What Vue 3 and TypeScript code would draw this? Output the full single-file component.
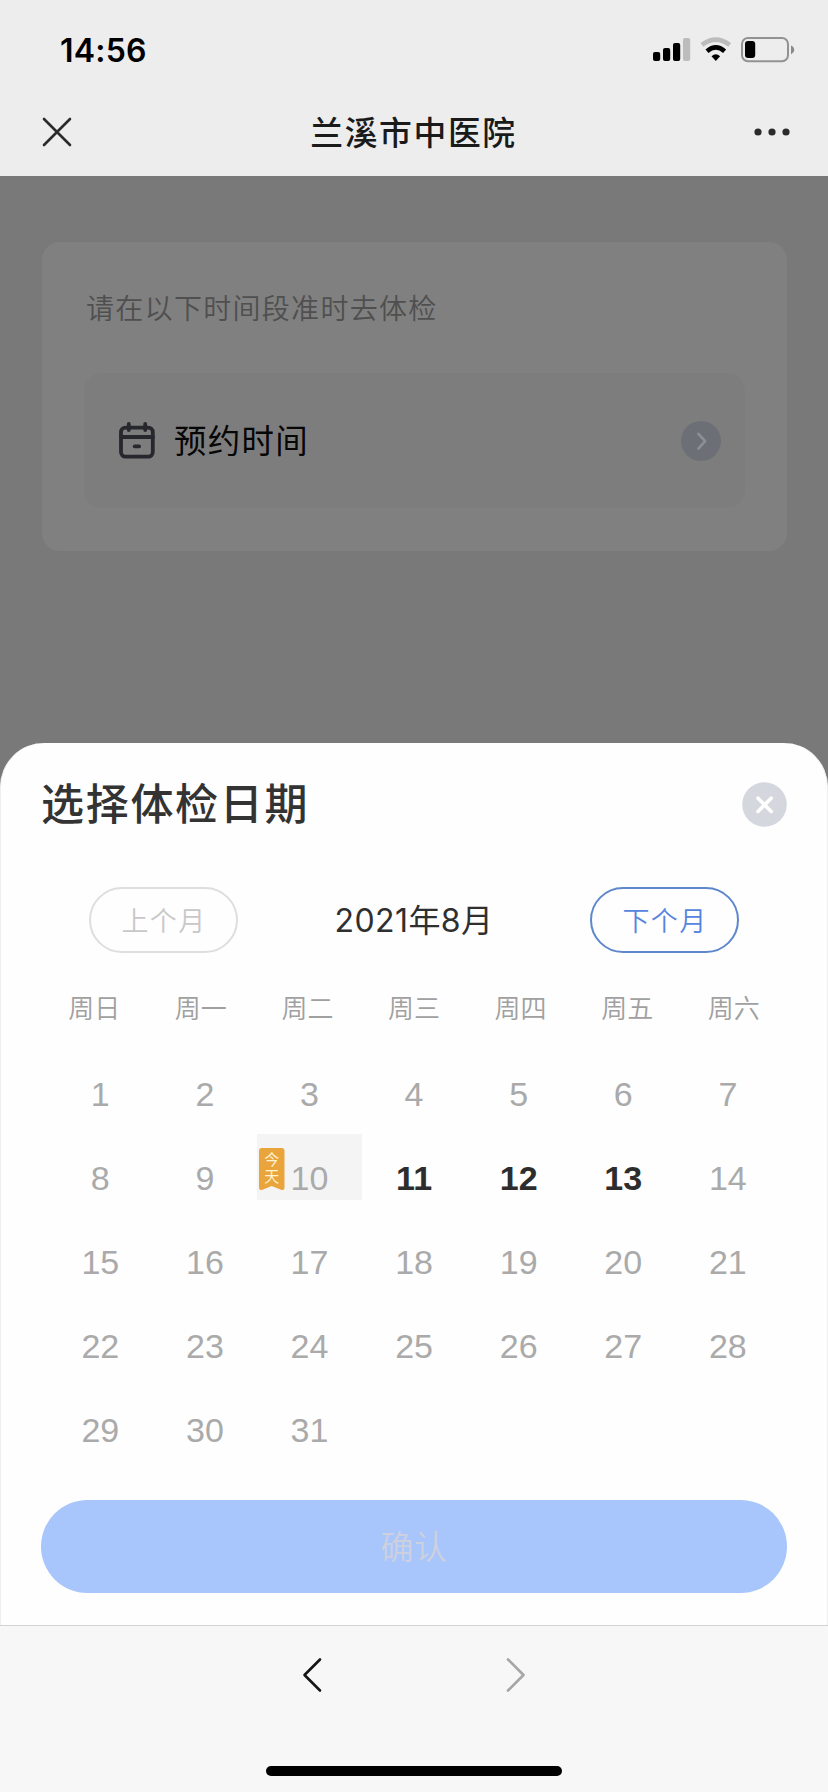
<script setup lang="ts">
interface Day {
  date: number
  available: boolean
  today: boolean
}

const weekdays: string[] = ['周日', '周一', '周二', '周三', '周四', '周五', '周六']
const days: Day[] = Array.from({ length: 31 }, (_, i) => ({
  date: i + 1,
  available: i + 1 >= 11 && i + 1 <= 13,
  today: i + 1 === 10,
}))
</script>

<template>
  <div class="screen">
    <header class="header">
      <div class="status">
        <span class="clock">14:56</span>
        <svg class="status-icons" width="142" height="26" viewBox="0 0 142 26">
          <rect x="0" y="15" width="7.2" height="9" rx="2" />
          <rect x="10" y="11" width="7.2" height="13" rx="2" />
          <rect x="20" y="6" width="7.2" height="18" rx="2" />
          <rect x="30" y="1" width="7.2" height="23" rx="2" fill="#bcbcbc" />
          <path d="M48.900 7.800 Q62.800 -2.600 76.700 7.800" fill="none" stroke="#bcbcbc" stroke-width="4.600" />
          <path d="M54 14.200 Q62.800 6.600 71.600 14.200" fill="none" stroke="#000" stroke-width="4.600" />
          <path d="M58.500 19.200 Q62.800 15.400 67.100 19.200 L62.800 24 Z" />
          <rect x="89" y="1" width="46" height="23.2" rx="6" fill="none" stroke="#929292" stroke-width="2" />
          <rect x="92" y="4" width="10.2" height="17" rx="3" />
          <path d="M138 8.4 q3.2 1.4 3.2 4.4 t-3.2 4.4 z" fill="#8a8a8a" />
        </svg>
      </div>
      <div class="navbar">
        <svg width="30" height="30" viewBox="0 0 30 30">
          <path d="M2 2 28 28M28 2 2 28" stroke="#2b2b2b" stroke-width="2.6" fill="none" stroke-linecap="round" />
        </svg>
        <h1>兰溪市中医院</h1>
        <svg width="36" height="8" viewBox="0 0 36 8" fill="#2b2b2b">
          <circle cx="4" cy="4" r="3.6" /><circle cx="18" cy="4" r="3.6" /><circle cx="32" cy="4" r="3.6" />
        </svg>
      </div>
    </header>

    <main class="page">
      <section class="card">
        <p class="hint">请在以下时间段准时去体检</p>
        <div class="entry">
          <svg width="36" height="37" viewBox="0 0 36 37" fill="none" stroke="#27272e" stroke-width="3.800" stroke-linecap="round">
            <rect x="2" y="5.6" width="31.8" height="29" rx="4.5" />
            <path d="M2 15H34M9.8 2V8M26.2 2V8" />
            <path d="M15.6 24.4H20.2" stroke-width="3.6" />
          </svg>
          <span class="entry-label">预约时间</span>
          <svg width="40" height="40" viewBox="0 0 40 40">
            <circle cx="20" cy="20" r="20" fill="#6c7076" />
            <path d="M17.4 12.8 24.2 20.2 17.4 27.6" fill="none" stroke="#8b9096" stroke-width="2.6" stroke-linecap="round" stroke-linejoin="round" />
          </svg>
        </div>
      </section>
    </main>

    <section class="sheet">
      <div class="sheet-head">
        <h2>选择体检日期</h2>
        <svg width="45" height="45" viewBox="0 0 45 45">
          <circle cx="22.5" cy="22.5" r="22.3" fill="#d4d7dd" />
          <path d="M16 16.200 29.200 29.400M29.200 16.200 16 29.400" stroke="#fff" stroke-width="3.600" stroke-linecap="round" />
        </svg>
      </div>

      <div class="months">
        <button class="month-btn" disabled>上个月</button>
        <span class="month">2021年8月</span>
        <button class="month-btn next">下个月</button>
      </div>

      <div class="weekdays">
        <span v-for="name in weekdays" :key="name">{{ name }}</span>
      </div>

      <div class="days">
        <div v-for="day in days" :key="day.date" class="day" :class="{ available: day.available, today: day.today }">
          <span v-if="day.today" class="ribbon">
            <svg width="26" height="43" viewBox="0 0 26 43">
              <path d="M3 0H22.500Q25.500 0 25.500 3V39.500Q25.500 43 22 41.800L12.750 38 3.500 41.800Q0 43 0 39.500V3Q0 0 3 0Z" fill="#e9a43c" />
            </svg>
            <span class="ribbon-text">今天</span>
          </span>
          {{ day.date }}
        </div>
      </div>

      <button class="confirm" disabled>确认</button>
    </section>

    <footer class="toolbar">
      <div class="arrows">
        <svg width="20" height="36" viewBox="0 0 20 36">
          <path d="M18 2.500 2.500 18 18 33.500" fill="none" stroke="#161616" stroke-width="2.600" stroke-linecap="round" stroke-linejoin="round" />
        </svg>
        <svg width="20" height="36" viewBox="0 0 20 36">
          <path d="M2 2.500 17.500 18 2 33.500" fill="none" stroke="#a6a6a6" stroke-width="2.600" stroke-linecap="round" stroke-linejoin="round" />
        </svg>
      </div>
      <div class="home-bar"></div>
    </footer>
  </div>
</template>

<style>
body {
  margin: 0;
}
</style>

<style scoped>
.screen {
  display: flex;
  flex-direction: column;
  width: 828px;
  height: 1792px;
  overflow: hidden;
  background: #797979;
  font-family: Inter, "Noto Sans CJK SC", sans-serif;
}
.screen * {
  box-sizing: border-box;
}
h1,
h2,
p {
  margin: 0;
}
button {
  padding: 0;
  font-family: inherit;
}
svg {
  display: block;
  flex: none;
}
.header {
  height: 176px;
  background: #ededed;
}
.status {
  display: flex;
  justify-content: space-between;
  align-items: center;
  height: 100px;
  padding: 0 33px 0 60px;
}
.clock {
  font-size: 32px;
  font-weight: 600;
  letter-spacing: 0.2px;
}
.navbar {
  display: flex;
  align-items: center;
  justify-content: space-between;
  height: 64px;
  padding: 0 38px 0 42px;
}
.navbar h1 {
  padding: 2px 0 0 1px;
  font-size: 32.8px;
  font-weight: 500;
  letter-spacing: 1.6px;
  line-height: 60px;
  color: #1a1a1a;
}
.page {
  height: 567px;
  padding: 66px 41px 0 42px;
}
.card {
  height: 309px;
  padding: 43px 42px 0;
  border-radius: 18px;
  background: #808080;
}
.hint {
  padding-left: 2px;
  font-family: "Noto Sans CJK SC", sans-serif;
  font-size: 28px;
  font-weight: 350;
  letter-spacing: 1.3px;
  line-height: 44px;
  color: #4f4f4f;
}
.entry {
  display: flex;
  align-items: center;
  height: 135px;
  margin-top: 44px;
  padding: 0 24px 0 35px;
  border-radius: 18px;
  background: #7d7d7d;
}
.entry-label {
  flex: 1;
  padding: 0 0 4px 19px;
  font-size: 32.4px;
  letter-spacing: 1.4px;
  color: #060606;
}
.sheet {
  height: 882px;
  padding: 36px 40px 0;
  border: 1px solid #efefef;
  border-width: 0 1px;
  border-radius: 44px 44px 0 0;
  background: #fefefe;
}
.sheet-head {
  display: flex;
  align-items: center;
  justify-content: space-between;
  height: 50px;
}
.sheet-head h2 {
  font-size: 43px;
  font-weight: 500;
  letter-spacing: 1.7px;
  line-height: 50px;
  color: #333;
}
.months {
  display: flex;
  align-items: center;
  justify-content: space-between;
  margin-top: 58px;
  padding: 0 48px;
}
.month-btn {
  width: 149px;
  height: 66px;
  padding-bottom: 2px;
  border: 2px solid #dedede;
  border-radius: 33px;
  background: transparent;
  font-size: 27px;
  font-weight: 350;
  letter-spacing: 1.3px;
  text-indent: 1px;
  color: #c8c8c8;
}
.month-btn.next {
  border-color: #5f88cc;
  color: #5585de;
}
.month {
  padding-bottom: 4px;
  font-size: 32px;
  letter-spacing: 0.4px;
  color: #2f2f2f;
}
.weekdays {
  display: grid;
  grid-template-columns: repeat(7, 1fr);
  margin-top: 36px;
  line-height: 40px;
  text-align: center;
  font-size: 26px;
  font-weight: 350;
  color: #a0a0a0;
}
.days {
  display: grid;
  grid-template-columns: repeat(7, 104.6px);
  grid-auto-rows: 66px;
  row-gap: 17.9px;
  margin: 21px 0 0 7px;
}
.day {
  position: relative;
  padding-top: 12px;
  text-align: center;
  font-family: "Liberation Sans", Arial, sans-serif;
  font-size: 34px;
  line-height: 64px;
  height: 66px;
  color: #aaa;
}
.day.available {
  font-weight: 700;
  color: #2d2d2d;
}
.day.today {
  background: #f4f4f5;
}
.ribbon {
  position: absolute;
  left: 2px;
  top: 14px;
}
.ribbon-text {
  position: absolute;
  left: 0;
  top: 4px;
  width: 25px;
  height: 35px;
  writing-mode: vertical-rl;
  font-family: "Noto Sans CJK SC", sans-serif;
  font-size: 15px;
  letter-spacing: 2px;
  line-height: 25px;
  text-align: left;
  color: #fff3d0;
}
.confirm {
  display: block;
  width: 746px;
  height: 93px;
  margin-top: 48.6px;
  padding-bottom: 3px;
  border: 0;
  border-radius: 47px;
  background: #a8c6fb;
  font-size: 33px;
  font-weight: 350;
  letter-spacing: 0.6px;
  color: #cdd0df;
}
.toolbar {
  display: flex;
  flex-direction: column;
  align-items: center;
  justify-content: space-between;
  height: 167px;
  padding: 31px 0 16px;
  border-top: 1px solid #d2d2d2;
  background: #f7f7f7;
}
.arrows {
  display: flex;
  gap: 184px;
}
.home-bar {
  width: 296px;
  height: 10px;
  border-radius: 5px;
  background: #000;
}
</style>
